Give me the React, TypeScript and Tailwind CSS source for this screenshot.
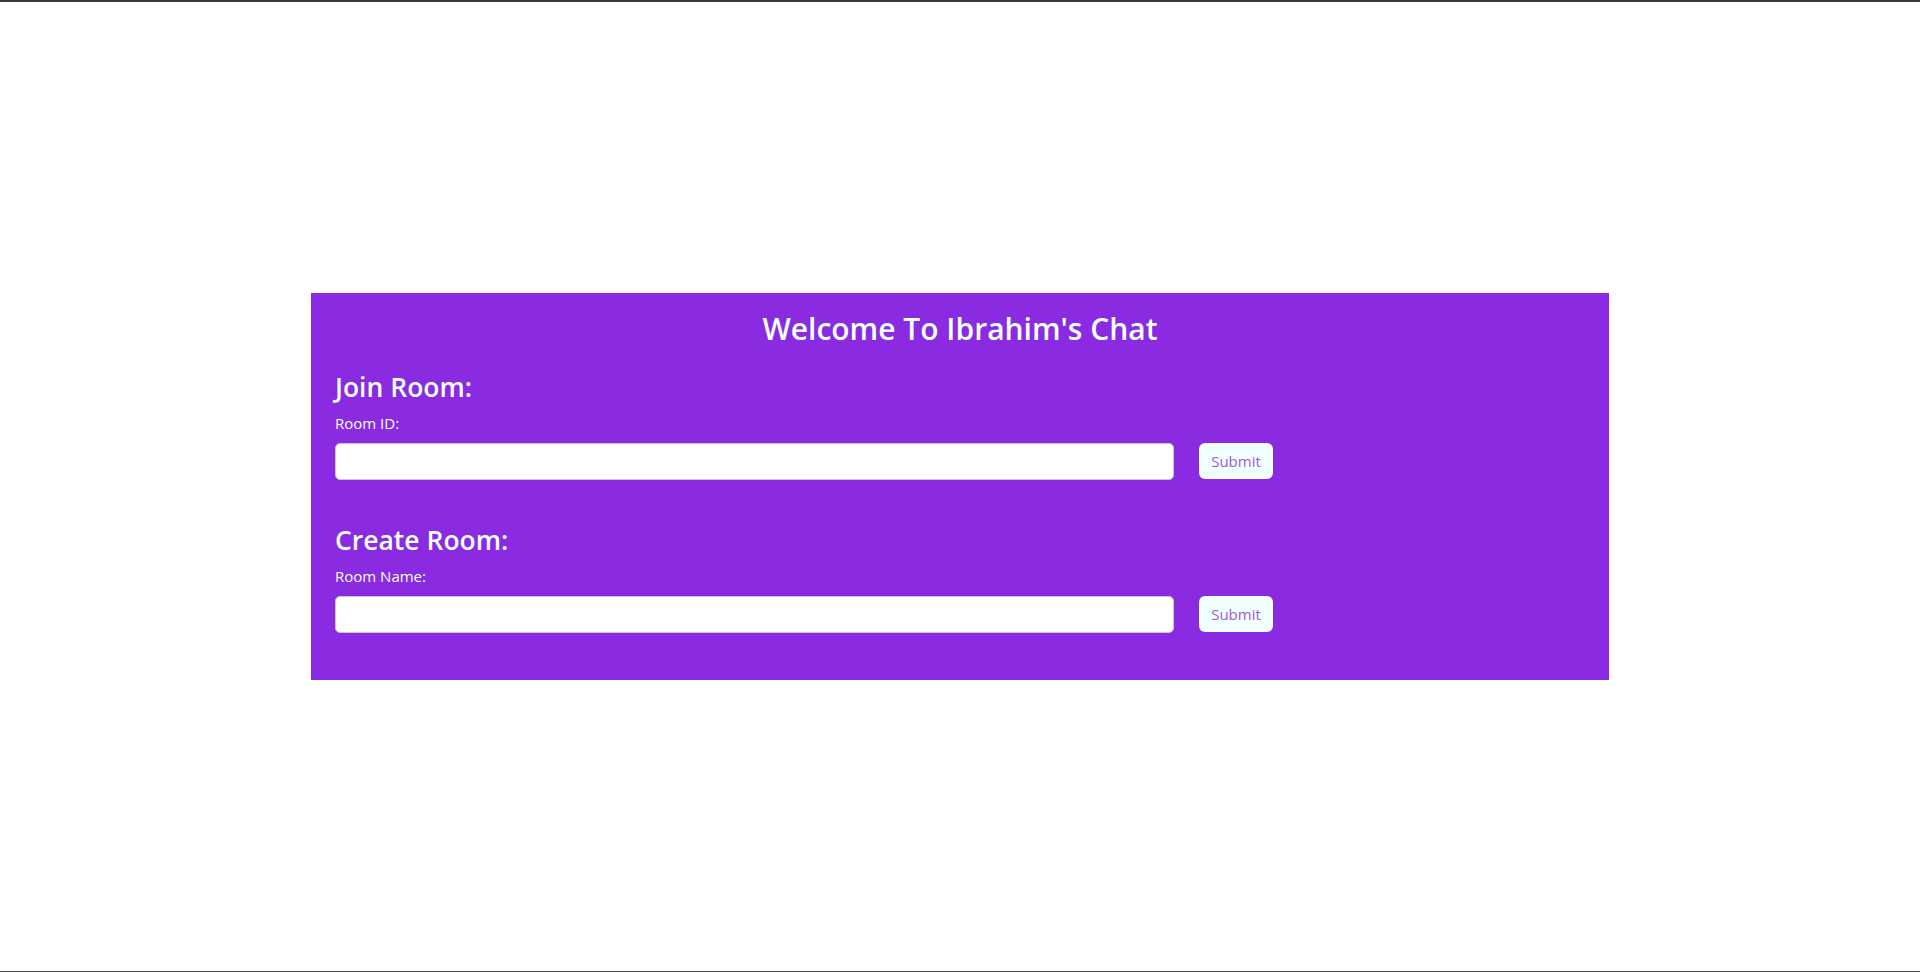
import React from "react";

const font = { fontFamily: '"Open Sans", "Noto Sans", Arial, sans-serif' };

function RoomForm({ title, label }: { title: string; label: string }) {
  return (
    <div className="flex flex-col">
      <h2 className="text-[26.5px] leading-[32px] font-semibold text-[#f0ffff]">{title}</h2>
      <label className="mt-[10px] text-[15px] leading-[20px] text-[#f0ffff]">{label}</label>
      <div className="mt-[10px] flex items-start gap-[25px]">
        <input
          type="text"
          className="h-[37px] w-[839px] rounded-[5px] border border-[#c8c8d0] bg-white px-2 text-base outline-none"
        />
        <button className="h-[36px] w-[74px] rounded-[6px] bg-[#f0ffff] text-[15px] text-[#a05ad8]">
          Submit
        </button>
      </div>
    </div>
  );
}

export default function App() {
  return (
    <div
      className="flex min-h-screen items-center justify-center border-t-2 border-b border-t-[#3c3c3c] border-b-[#4a4a4a] bg-white"
      style={font}
    >
      <div className="flex h-[387px] w-[1298px] flex-col bg-[#8a2be2] px-[24px] pb-[47px] pt-[16px]">
        <h1 className="text-center text-[30px] leading-[40px] font-semibold text-[#f0ffff]">
          Welcome To Ibrahim's Chat
        </h1>
        <div className="mt-[22px]">
          <RoomForm title="Join Room:" label="Room ID:" />
        </div>
        <div className="mt-[44px]">
          <RoomForm title="Create Room:" label="Room Name:" />
        </div>
      </div>
    </div>
  );
}
